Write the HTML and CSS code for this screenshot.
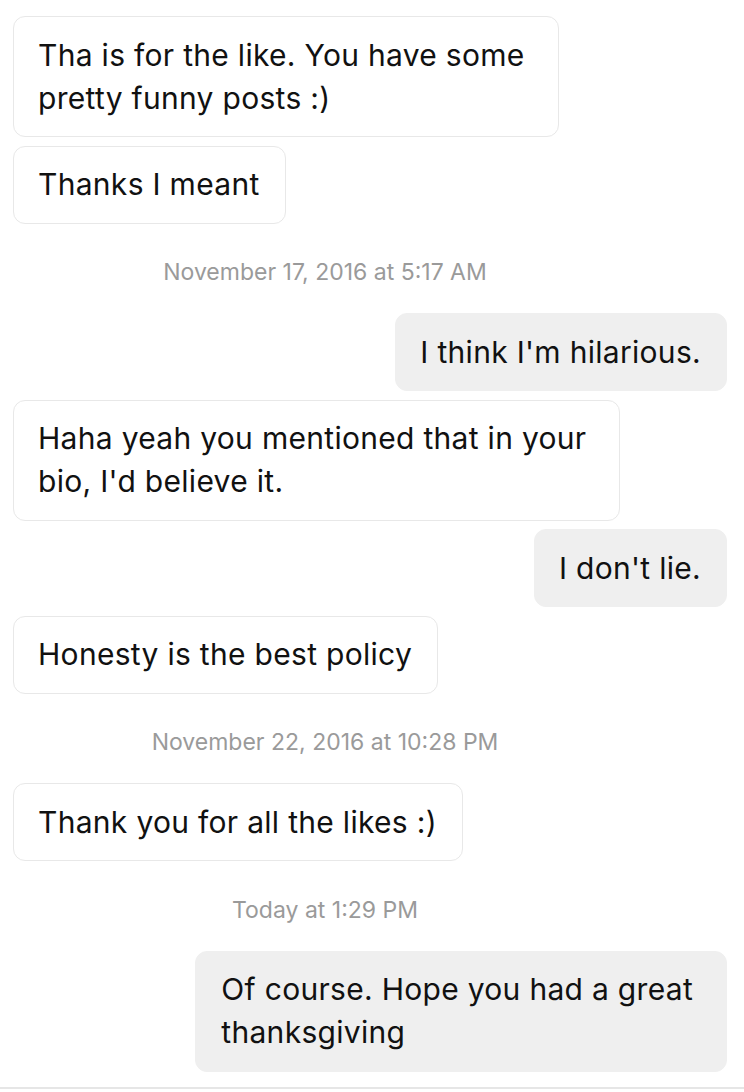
FILE: index.html
```html
<!DOCTYPE html>
<html lang="en">
<head>
<meta charset="utf-8">
<title>Messages</title>
<link rel="stylesheet" href="styles.css">
</head>
<body>
<div class="thread">
  <div class="msg in wrap">Tha is for the like. You have some<br>pretty funny posts :)</div>
  <div class="msg in">Thanks I meant</div>
  <div class="stamp">November 17, 2016 at 5:17 AM</div>
  <div class="msg out">I think I'm hilarious.</div>
  <div class="msg in wrap">Haha yeah you mentioned that in your<br>bio, I'd believe it.</div>
  <div class="msg out">I don't lie.</div>
  <div class="msg in">Honesty is the best policy</div>
  <div class="stamp">November 22, 2016 at 10:28 PM</div>
  <div class="msg in">Thank you for all the likes :)</div>
  <div class="stamp">Today at 1:29 PM</div>
  <div class="msg out wrap">Of course. Hope you had a great<br>thanksgiving</div>
</div>
<div class="footer"></div>
</body>
</html>
```

FILE: styles.css
```css
html, body {
  margin: 0;
  padding: 0;
  background: #ffffff;
}

body {
  font-family: "Inter", "Liberation Sans", sans-serif;
  color: #111111;
  width: 744px;
  height: 1092px;
  overflow: hidden;
}

.thread {
  display: flex;
  flex-direction: column;
  gap: 8.5px;
  padding: 16px 17px 0 13px;
}

.msg {
  font-size: 30px;
  line-height: 43px;
  letter-spacing: 0.3px;
  padding: 16.5px 25px 16.5px 24px;
  border-radius: 12px;
  border: 1px solid #e8e8e8;
  background: #ffffff;
  white-space: nowrap;
  width: fit-content;
}

.msg.wrap {
  padding-right: 33px;
}

.msg.out.wrap {
  padding-left: 25px;
}

.msg.in {
  align-self: flex-start;
}

.msg.out {
  align-self: flex-end;
  background: #efefef;
  border-color: #efefef;
}

.stamp {
  font-size: 23px;
  line-height: 30px;
  color: #9a9a9a;
  text-align: center;
  padding-right: 90px;
  margin: 25px 0 17.5px 0;
}

.footer {
  margin-top: 15px;
  border-top: 2px solid #e6e6e6;
}
```
